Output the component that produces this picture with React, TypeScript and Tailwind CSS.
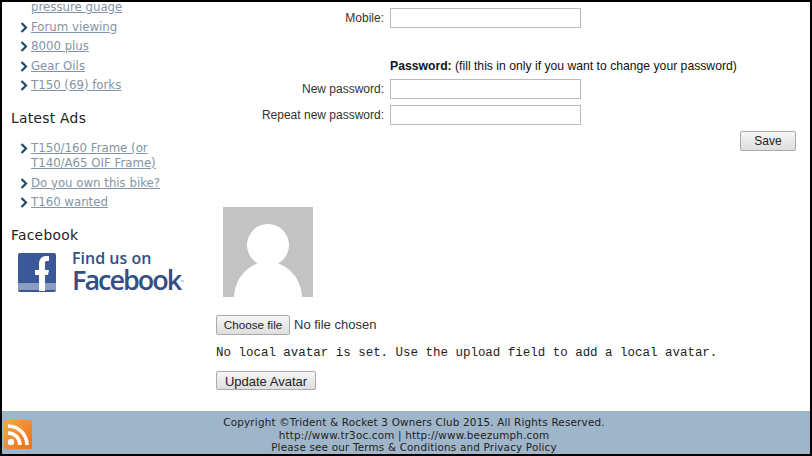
const verdana = "font-['DejaVu_Sans',sans-serif]";
const arial = "font-['Liberation_Sans',sans-serif]";

function Chevron() {
  return (
    <svg width="8" height="11" viewBox="0 0 8 11" className="shrink-0 mt-[2px]">
      <path d="M1.5 1 L6 5.5 L1.5 10" fill="none" stroke="#1f4e6b" strokeWidth="2.2" />
    </svg>
  );
}

function SideLink({ lines }: { lines: string[] }) {
  return (
    <li className="flex gap-[3px] pl-[18px]">
      <Chevron />
      <a className="text-[11.75px] leading-[15px] text-[#8395a5] underline">
        {lines.map((l) => (
          <div key={l}>{l}</div>
        ))}
      </a>
    </li>
  );
}

function Heading({ children }: { children: string }) {
  return <h3 className="pl-[9px] text-[13.8px] leading-[18px] text-[#222] tracking-[0.3px]">{children}</h3>;
}

function FormRow({ label }: { label: string }) {
  return (
    <div className="flex items-center gap-[6px] h-[20px]">
      <label className="w-[168px] text-right text-[12px] text-[#333]">{label}</label>
      <input className="w-[191px] h-[20px] border border-[#bbb] bg-white" />
    </div>
  );
}

function FacebookBadge() {
  return (
    <div className="flex items-center pl-[16px] gap-[16px] h-[40px] mt-[8px]">
      <svg width="38" height="39" viewBox="0 0 38 39" className="shrink-0">
        <rect width="38" height="39" rx="2" fill="#3b5998" />
        <rect y="30" width="38" height="7" fill="#8b9dc3" />
        <path d="M21 38 V22 H17 V17 H21 V11 C21 6 24 3 28 3 H31 V8 H29 C27 8 27 9 27 11 V17 H31 L30 22 H27 V38 Z" fill="#fff" />
      </svg>
      <div className="text-[#344e86] font-['Open_Sans',sans-serif] font-semibold">
        <div className="text-[16px] leading-[18px]">Find us on</div>
        <div className="text-[27px] leading-[25px] tracking-[-2px] whitespace-nowrap">
          Facebook<span className="align-middle text-[5px] tracking-normal text-[#8a97b5]">™</span>
        </div>
      </div>
    </div>
  );
}

function Sidebar() {
  return (
    <aside className={`${verdana} w-[214px] shrink-0 -mt-[2px]`}>
      <ul className="flex flex-col gap-[4.5px]">
        <li className="pl-[29px] text-[11.75px] leading-[15px] text-[#8395a5] underline">pressure guage</li>
        <SideLink lines={["Forum viewing"]} />
        <SideLink lines={["8000 plus"]} />
        <SideLink lines={["Gear Oils"]} />
        <SideLink lines={["T150 (69) forks"]} />
      </ul>
      <div className="mt-[16px]">
        <Heading>Latest Ads</Heading>
      </div>
      <ul className="flex flex-col gap-[4.5px] mt-[14px]">
        <SideLink lines={["T150/160 Frame (or", "T140/A65 OIF Frame)"]} />
        <SideLink lines={["Do you own this bike?"]} />
        <SideLink lines={["T160 wanted"]} />
      </ul>
      <div className="mt-[16px]">
        <Heading>Facebook</Heading>
      </div>
      <FacebookBadge />
    </aside>
  );
}

function Avatar() {
  return (
    <svg width="90" height="90" viewBox="0 0 90 90" className="ml-[7px] block">
      <rect width="90" height="90" fill="#c3c3c3" />
      <circle cx="45" cy="38" r="21" fill="#fff" />
      <path d="M11 90 C12 70 26 56 45 54 C64 56 78 70 79 90 Z" fill="#fff" />
    </svg>
  );
}

function GreyButton({ children, className }: { children: string; className: string }) {
  return (
    <button className={`${arial} border border-[#aaa] rounded-[2px] bg-gradient-to-b from-[#f6f6f6] to-[#dedede] text-[#222] ${className}`}>
      {children}
    </button>
  );
}

function Main() {
  return (
    <main className={`${arial} flex-1 min-w-0 pt-[6px] pr-[14px]`}>
      <FormRow label="Mobile:" />
      <p className="mt-[30px] pl-[174px] text-[12.2px] leading-[16px] text-[#111]">
        <b>Password:</b> (fill this in only if you want to change your password)
      </p>
      <div className="mt-[5px] flex flex-col gap-[6px]">
        <FormRow label="New password:" />
        <FormRow label="Repeat new password:" />
      </div>
      <div className="flex justify-end mt-[6px]">
        <GreyButton className="w-[56px] h-[20px] text-[12px]">Save</GreyButton>
      </div>
      <div className="mt-[56px]">
        <Avatar />
      </div>
      <div className="mt-[18px] flex items-center gap-[4px]">
        <GreyButton className="w-[74px] h-[20px] text-[11.7px]">Choose file</GreyButton>
        <span className="text-[13px] text-[#333]">No file chosen</span>
      </div>
      <p className="mt-[11px] font-['Liberation_Mono',monospace] text-[12.47px] leading-[14px] text-[#222]">
        No local avatar is set. Use the upload field to add a local avatar.
      </p>
      <GreyButton className="w-[100px] h-[19px] text-[13px] mt-[11px] block">Update Avatar</GreyButton>
    </main>
  );
}

function Footer() {
  return (
    <footer className={`${verdana} relative h-[43px] bg-[#9fb5ca] text-center text-[10.4px] leading-[12.5px] text-[#222] pt-[5px] pl-[16px] tracking-[0.18px]`}>
      <svg width="28" height="29" viewBox="0 0 28 29" className="absolute left-[2px] top-[9px]">
        <defs>
          <linearGradient id="rss" x1="0" y1="0" x2="1" y2="1">
            <stop offset="0" stopColor="#f7a64a" />
            <stop offset="1" stopColor="#e9701a" />
          </linearGradient>
        </defs>
        <rect width="28" height="29" rx="2" fill="url(#rss)" />
        <circle cx="7" cy="22" r="3.2" fill="#fff" />
        <path d="M4 13 A12 12 0 0 1 16 25" fill="none" stroke="#fff" strokeWidth="3.6" />
        <path d="M4 6 A19 19 0 0 1 23 25" fill="none" stroke="#fff" strokeWidth="3.6" />
      </svg>
      <div>Copyright ©Trident &amp; Rocket 3 Owners Club 2015. All Rights Reserved.</div>
      <div>http://www.tr3oc.com | http://www.beezumph.com</div>
      <div>Please see our Terms &amp; Conditions and Privacy Policy</div>
    </footer>
  );
}

export default function App() {
  return (
    <div className="w-[812px] h-[456px] overflow-hidden bg-black p-[2px]">
      <div className="h-[452px] bg-white flex flex-col overflow-hidden">
        <div className="flex-1 min-h-0 flex overflow-hidden">
          <Sidebar />
          <Main />
        </div>
        <Footer />
      </div>
    </div>
  );
}
